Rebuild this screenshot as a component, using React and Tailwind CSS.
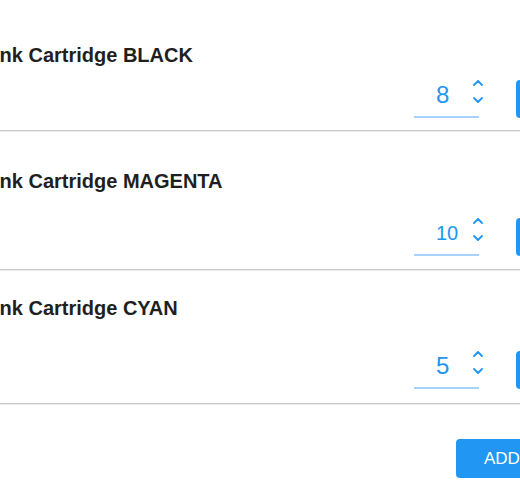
import React from 'react';

const items = [
  { name: 'Ink Cartridge BLACK', qty: 8, size: 'text-[24px]', pt: 'pt-[43px]', gap: 'mt-[13px]', pb: 'pb-[12px]' },
  { name: 'Ink Cartridge MAGENTA', qty: 10, size: 'text-[20px]', pt: 'pt-[38px]', gap: 'mt-[25px]', pb: 'pb-[13px]' },
  { name: 'Ink Cartridge CYAN', qty: 5, size: 'text-[24px]', pt: 'pt-[26px]', gap: 'mt-[31px]', pb: 'pb-[14px]' }
];

function Spinner() {
  return (
    <div className="absolute left-[59px] top-0 flex flex-col gap-[11px]">
      <svg width="10" height="6" viewBox="0 0 10 6" fill="none">
        <path d="M1 5L5 1L9 5" stroke="#2196f3" strokeWidth="1.8" strokeLinecap="round" strokeLinejoin="round" />
      </svg>
      <svg width="10" height="6" viewBox="0 0 10 6" fill="none">
        <path d="M1 1L5 5L9 1" stroke="#2196f3" strokeWidth="1.8" strokeLinecap="round" strokeLinejoin="round" />
      </svg>
    </div>
  );
}

function CartRow({ item }) {
  return (
    <div className={`${item.pt} ${item.pb} border-b border-[#c8c8c8] shadow-[0_1px_0_#ececec]`}>
      <h3 className="text-[20px] leading-[24px] font-bold text-[#1f1f1f]">{item.name}</h3>
      <div className={`${item.gap} ml-[420px] flex items-end`}>
        <div className="relative w-[65px] h-[38px] border-b-2 border-[#a6d3fb] flex items-center pb-[6px] pl-[22px]">
          <span className={`${item.size} text-[#2196f3] leading-none`}>{item.qty}</span>
          <Spinner />
        </div>
        <button className="ml-[37px] w-[70px] h-[38px] rounded-[4px] bg-[#2196f3]" />
      </div>
    </div>
  );
}

export default function App() {
  return (
    <div className="w-[520px] h-[500px] overflow-hidden bg-white" style={{ fontFamily: '"Liberation Sans", Arial, sans-serif' }}>
      <div className="-ml-[6px] w-[620px]">
        {items.map((item) => <CartRow key={item.name} item={item} />)}
        <div className="mt-[35px] ml-[462px]">
          <button className="h-[39px] w-[100px] rounded-[4px] bg-[#2196f3] text-white text-[17px] text-left pl-[28px]">
            ADD
          </button>
        </div>
      </div>
    </div>
  );
}
